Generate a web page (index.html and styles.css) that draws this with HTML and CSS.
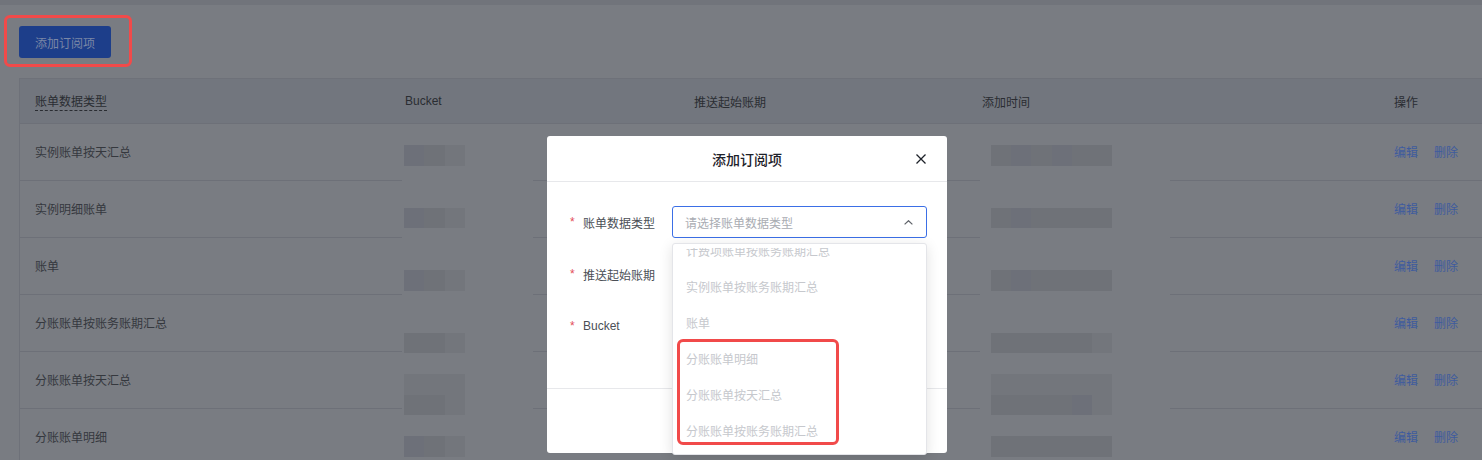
FILE: index.html
```html
<!DOCTYPE html>
<html lang="zh-CN">
<head>
    <meta charset="UTF-8">
    <meta name="viewport" content="width=device-width, initial-scale=1.0">
    <title>账单订阅</title>
    <link rel="stylesheet" href="styles.css">
</head>
<body>
    <div class="topbar"></div>

    <main class="page">
        <button class="btn-primary">添加订阅项</button>

        <div class="table">
            <div class="tr th">
                <div class="td"><span class="dashed">账单数据类型</span></div>
                <div class="td">Bucket</div>
                <div class="td">推送起始账期</div>
                <div class="td">添加时间</div>
                <div class="td">操作</div>
            </div>
            <div class="tr">
                <div class="td">实例账单按天汇总</div>
                <div class="td"></div>
                <div class="td"></div>
                <div class="td"></div>
                <div class="td ops"><a>编辑</a><a>删除</a></div>
            </div>
            <div class="tr">
                <div class="td">实例明细账单</div>
                <div class="td"></div>
                <div class="td"></div>
                <div class="td"></div>
                <div class="td ops"><a>编辑</a><a>删除</a></div>
            </div>
            <div class="tr">
                <div class="td">账单</div>
                <div class="td"></div>
                <div class="td"></div>
                <div class="td"></div>
                <div class="td ops"><a>编辑</a><a>删除</a></div>
            </div>
            <div class="tr">
                <div class="td">分账账单按账务账期汇总</div>
                <div class="td"></div>
                <div class="td"></div>
                <div class="td"></div>
                <div class="td ops"><a>编辑</a><a>删除</a></div>
            </div>
            <div class="tr">
                <div class="td">分账账单按天汇总</div>
                <div class="td"></div>
                <div class="td"></div>
                <div class="td"></div>
                <div class="td ops"><a>编辑</a><a>删除</a></div>
            </div>
            <div class="tr">
                <div class="td">分账账单明细</div>
                <div class="td"></div>
                <div class="td"></div>
                <div class="td"></div>
                <div class="td ops"><a>编辑</a><a>删除</a></div>
            </div>
        </div>
    </main>

    <!-- redacted columns -->
    <div class="redact redact-bucket">
        <div class="mosaic"><i class="c1"></i><i class="c2"></i><i class="c3"></i></div>
        <div class="mosaic"><i class="c1"></i><i class="c2"></i><i class="c3"></i></div>
        <div class="mosaic"><i class="c1"></i><i class="c2"></i><i class="c3"></i></div>
        <div class="mosaic"><i class="c2"></i><i class="c2"></i><i class="c3"></i></div>
        <div class="mosaic tall near"><i class="c3"></i><i class="c3"></i><i class="c3"></i><i class="c2"></i><i class="c2"></i><i class="c3"></i></div>
        <div class="mosaic near"><i class="c1"></i><i class="c2"></i><i class="c3"></i></div>
    </div>
    <div class="redact redact-time">
        <div class="mosaic wide"><i class="c2"></i><i class="c1"></i><i class="c2"></i><i class="c1"></i><i class="c2"></i><i class="c2"></i></div>
        <div class="mosaic wide"><i class="c2"></i><i class="c1"></i><i class="c2"></i><i class="c2"></i><i class="c2"></i><i class="c2"></i></div>
        <div class="mosaic wide"><i class="c2"></i><i class="c1"></i><i class="c2"></i><i class="c2"></i><i class="c2"></i><i class="c2"></i></div>
        <div class="mosaic wide"><i class="c2"></i><i class="c2"></i><i class="c2"></i><i class="c2"></i><i class="c2"></i><i class="c3"></i></div>
        <div class="mosaic wide tall near"><i class="c3"></i><i class="c3"></i><i class="c3"></i><i class="c3"></i><i class="c3"></i><i class="c3"></i><i class="c2"></i><i class="c2"></i><i class="c2"></i><i class="c2"></i><i class="c1"></i><i class="c3"></i></div>
        <div class="mosaic wide near"><i class="c2"></i><i class="c2"></i><i class="c2"></i><i class="c2"></i><i class="c2"></i><i class="c2"></i></div>
    </div>

    <div class="modal">
        <div class="modal-header">
            <span></span>
            <span class="modal-title">添加订阅项</span>
            <svg class="modal-close" width="10" height="10" viewBox="0 0 10 10">
                <path d="M0.5 0.5 L9.5 9.5 M9.5 0.5 L0.5 9.5" stroke="#1d2129" stroke-width="1.3" fill="none"/>
            </svg>
        </div>
        <div class="modal-body">
            <div class="form-item">
                <label><span class="req">*</span>账单数据类型</label>
                <div class="select">
                    <span class="placeholder">请选择账单数据类型</span>
                    <svg width="9" height="5" viewBox="0 0 9 5">
                        <path d="M0.6 4.4 L4.5 0.7 L8.4 4.4" stroke="#5f6369" stroke-width="1.2" fill="none"/>
                    </svg>
                </div>
            </div>
            <div class="form-item">
                <label><span class="req">*</span>推送起始账期</label>
            </div>
            <div class="form-item">
                <label><span class="req">*</span>Bucket</label>
            </div>
        </div>
        <div class="modal-footer"></div>
    </div>

    <div class="dropdown">
        <div class="dd-view">
            <ul class="dd-list">
                <li>计费项账单按账务账期汇总</li>
                <li>实例账单按账务账期汇总</li>
                <li>账单</li>
                <li>分账账单明细</li>
                <li>分账账单按天汇总</li>
                <li>分账账单按账务账期汇总</li>
            </ul>
        </div>
    </div>

    <div class="mark mark-btn"></div>
    <div class="mark mark-opts"></div>
</body>
</html>
```

FILE: styles.css
```css
body { margin: 0; background: #797c82; font-family: "Liberation Sans", "Noto Sans CJK SC", sans-serif; font-size: 12px; color: #35383e; overflow: hidden; }
.topbar { height: 5px; background: #71747b; }
.page { padding: 21px 0 0 19px; }

.btn-primary { display: block; height: 32px; padding: 0 16px; border: none; border-radius: 3px; background: #1d3e8a; color: #7a87a6; font: inherit; margin-bottom: 20px; }

.table { border-top: 1px solid #6e7179; border-left: 1px solid #6e7179; }
.tr { display: grid; grid-template-columns: 369px 289px 288px 412px 1fr; height: 57px; box-sizing: border-box; border-bottom: 1px solid #6d7078; }
.th { height: 45px; background: #72767e; color: #2a2d32; }
.td { display: flex; align-items: center; padding-left: 16px; padding-bottom: 2px; }
.td:first-child { padding-left: 15px; }
.th .td { padding-bottom: 0; }
.dashed { border-bottom: 1px dashed #2a2d32; line-height: 16px; margin-top: 2px; }
.ops { gap: 16px; }
.ops a { color: #3e5b9e; }

.redact { position: absolute; top: 143px; height: 320px; background: #797c82; display: flex; flex-direction: column; gap: 42px; padding: 2px 0 0; box-sizing: border-box; }
.redact-bucket { left: 402px; width: 131px; padding-left: 2px; }
.redact-time { left: 980px; width: 190px; padding-left: 11px; }
.mosaic { display: grid; grid-template-columns: repeat(3, 20.3px); grid-auto-rows: 20.5px; }
.mosaic.wide { grid-template-columns: repeat(6, 20.2px); }
.mosaic.near { margin-top: -21px; }
.mosaic i { display: block; }
.c1 { background: #6d7079; }
.c2 { background: #6f7278; }
.c3 { background: #73767c; }

.modal { position: absolute; left: 547px; top: 136px; width: 400px; height: 317px; background: #fff; border-radius: 3px; display: flex; flex-direction: column; }
.modal-header { height: 45px; display: grid; grid-template-columns: 1fr auto 1fr; align-items: center; padding: 0 21px; border-bottom: 1px solid #e7e8eb; }
.modal-title { font-size: 14px; font-weight: 500; color: #1d2129; }
.modal-close { justify-self: end; }
.modal-body { padding: 24px 0 46px 23px; display: flex; flex-direction: column; gap: 20px; border-bottom: 1px solid #e7e8eb; }
.form-item { display: flex; align-items: center; height: 32px; }
.form-item label { width: 102px; flex-shrink: 0; color: #4b4f56; display: flex; align-items: center; }
.req { color: #e34d59; width: 13px; margin-top: -1px; }
.select { width: 255px; flex-shrink: 0; height: 32px; box-sizing: border-box; border: 1px solid #3b6fe6; border-radius: 3px; padding: 0 13px 0 12px; display: flex; align-items: center; justify-content: space-between; }
.placeholder { color: #a9acb2; }

.dropdown { position: absolute; left: 672px; top: 243px; width: 255px; height: 212px; box-sizing: border-box; background: #fff; border: 1px solid #e4e5e9; border-radius: 3px; box-shadow: 0 3px 14px rgba(0, 0, 0, 0.12); padding: 4px 0; }
.dd-view { height: 100%; overflow: hidden; }
.dd-list { list-style: none; margin: -14px 0 0; padding: 0; }
.dd-list li { height: 36px; line-height: 36px; padding-left: 13px; color: #c6c8cd; }

.mark { position: absolute; border: 3px solid #f14a4a; border-radius: 6px; box-sizing: border-box; }
.mark-btn { left: 4px; top: 15px; width: 128px; height: 52px; }
.mark-opts { left: 677px; top: 339px; width: 162px; height: 106px; }
```
